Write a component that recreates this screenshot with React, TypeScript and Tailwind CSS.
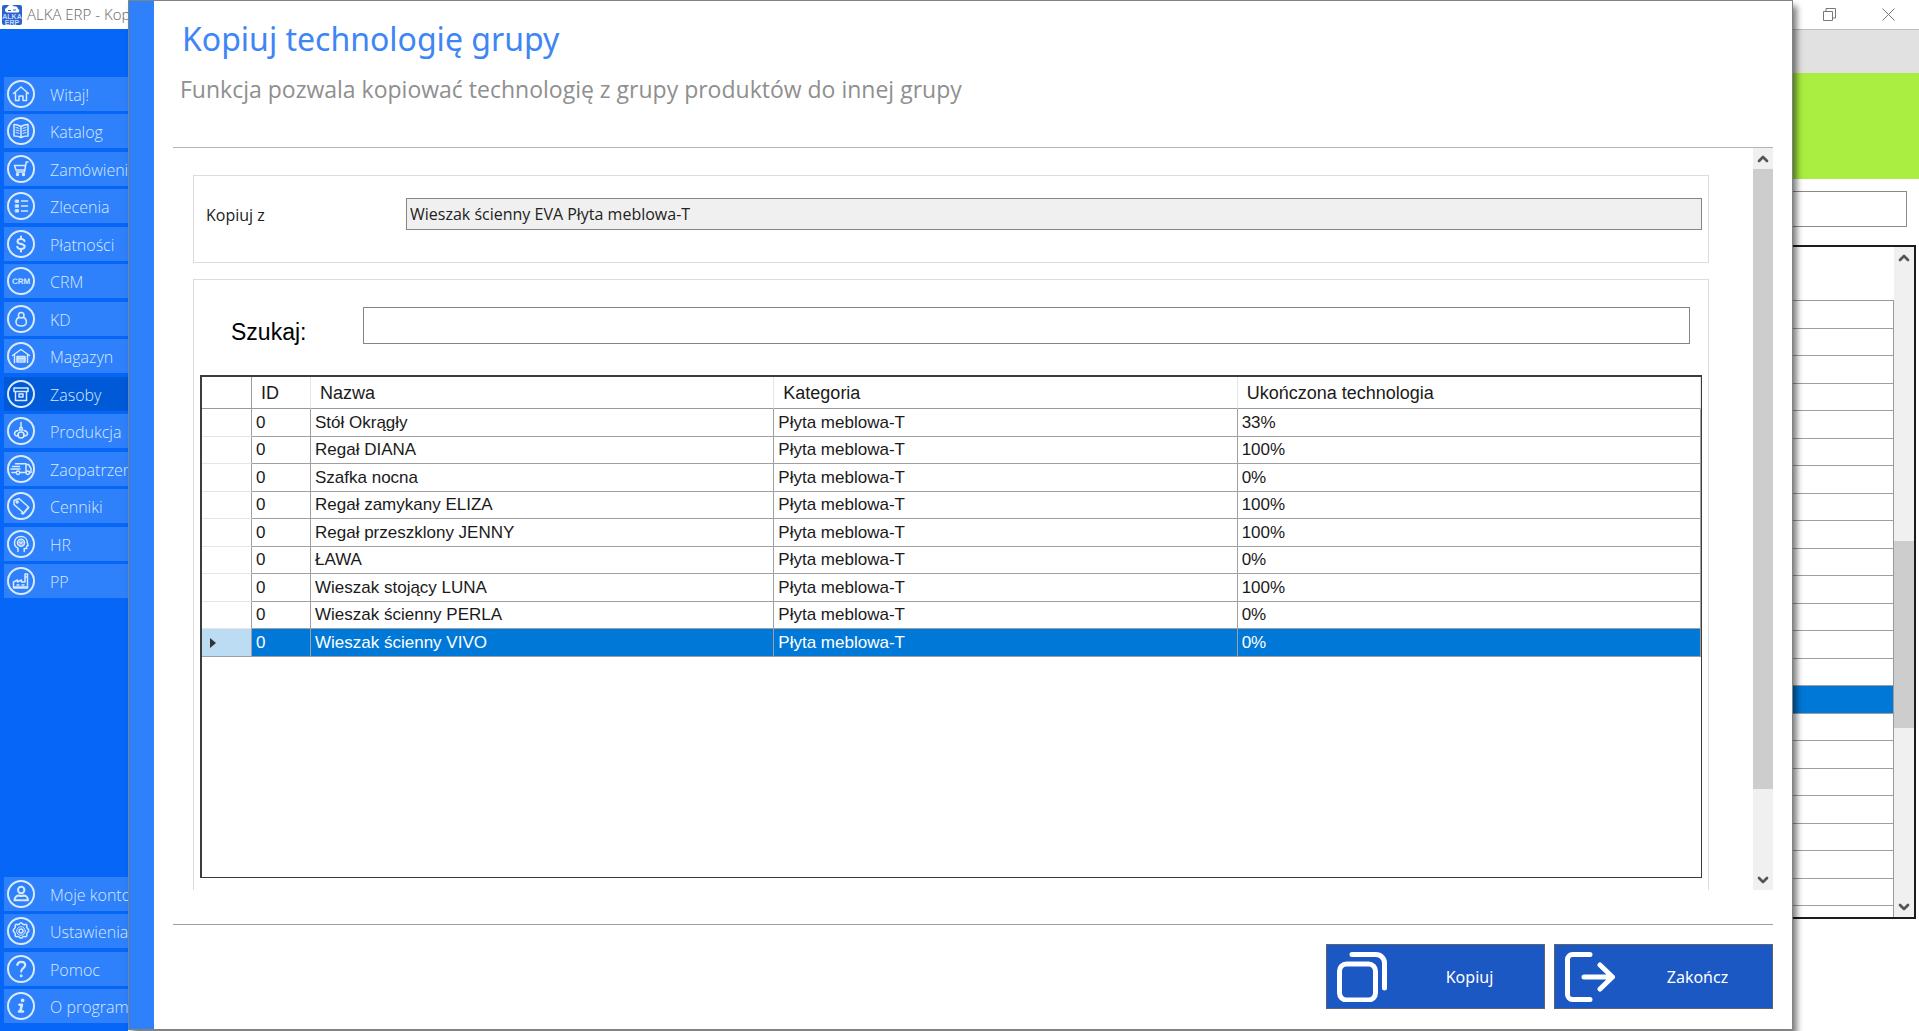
import type { ReactNode } from "react";
import { ChevronDown, ChevronUp } from "lucide-react";

type MenuItem = { label: string; icon: ReactNode; active?: boolean };

const mainMenu: MenuItem[] = [
  { label: "Witaj!", icon: <path d="M6.5 13.5 14 7l7.5 6.5M8.5 12.5v8h3.5v-4.5h4v4.5h3.5v-8" /> },
  {
    label: "Katalog",
    icon: (
      <>
        <path d="M14 9.500c-2-1.200-4.500-2-7-2V19c2.500 0 5 .300 7 1.500 2-1.200 4.500-1.500 7-1.500V7.500c-2.500 0-5 .800-7 2zM14 9.500v11" />
        <path strokeWidth="1" d="M9 10.500l3 .8M9 13l3 .8M9 15.500l3 .8M19 10.500l-3 .8M19 13l-3 .8M19 15.500l-3 .8" />
      </>
    ),
  },
  {
    label: "Zamówienia",
    icon: (
      <>
        <path d="M21 7h-1.800l-1.700 10H9.500M7.500 10.500h10.500M7.500 10.500l1.500 4.500h8.500" />
        <circle cx="10.500" cy="19.500" r="1" fill="currentColor" />
        <circle cx="16.500" cy="19.500" r="1" fill="currentColor" />
      </>
    ),
  },
  {
    label: "Zlecenia",
    icon: (
      <>
        <path d="M14.500 9h6M14.500 14h6M14.500 19h6" />
        <path fill="currentColor" d="M8.500 8h3v2.500h-3zM8.500 12.800h3v2.500h-3zM8.500 17.600h3v2.500h-3z" strokeWidth="0.8" />
      </>
    ),
  },
  {
    label: "Płatności",
    icon: <path strokeWidth="2" d="M17.500 11c-.500-1.500-1.800-2-3.500-2-2 0-3.500.800-3.500 2.400 0 3.600 7.200 1.800 7.200 5.200 0 1.600-1.600 2.400-3.700 2.400-2 0-3.300-.700-3.800-2.200M14 6.500V9M14 19v2.500" />,
  },
  {
    label: "CRM",
    icon: (
      <text
        x="14"
        y="16.500"
        textAnchor="middle"
        fontSize="8"
        fontWeight="700"
        fontFamily="Liberation Sans, sans-serif"
        textRendering="geometricPrecision"
        fill="currentColor"
        stroke="none"
      >
        CRM
      </text>
    ),
  },
  {
    label: "KD",
    icon: (
      <>
        <circle cx="14.200" cy="10.200" r="2.800" />
        <path d="M11.800 12.500c-1.800.800-2.800 2.500-2.800 4.500 0 2.800 1.200 4 5.200 4s5.200-1.200 5.200-4c0-2-1-3.700-2.800-4.500" />
      </>
    ),
  },
  {
    label: "Magazyn",
    icon: (
      <>
        <path d="M5.500 13.500 14 7.500l8.500 6M7.500 12.500v8M20.500 12.500v8" />
        <path d="M10 20v-5.500h8V20zM10 16.200h8M10 18h8" />
      </>
    ),
  },
  {
    label: "Zasoby",
    active: true,
    icon: <path d="M7 8h14v3.500H7zM8.500 11.500v9h11v-9M12 14h4v3h-4z" />,
  },
  {
    label: "Produkcja",
    icon: (
      <>
        <path d="M14 5.500v5M13 10.500h2l.500 2.500h-3z" />
        <path d="M11 13.500c-2.200.500-3.500 1.600-3.500 3 0 1.200 1 2.200 2.500 2.600l1.500-1.600M17 13.500c2.200.500 3.500 1.600 3.500 3 0 1.200-1 2.200-2.500 2.600l-1.500-1.600" />
        <circle cx="14" cy="18" r="3" />
      </>
    ),
  },
  {
    label: "Zaopatrzenie",
    icon: (
      <>
        <path d="M8.500 8.800h10.500v8.700M19 9.500h2.500l2.500 4v4h-1.500M5.500 11.500h7M4 14h9M5 17.500h4M13 17.500h6" />
        <circle cx="11" cy="17.700" r="1.700" />
        <circle cx="20.800" cy="17.700" r="1.700" />
      </>
    ),
  },
  {
    label: "Cenniki",
    icon: (
      <>
        <path d="M7 8.500 12 6.500l9.500 8.500-5 6-9.500-8.500z" />
        <path d="m14.500 21.300 1.700.7 5.500-6.500" />
        <circle cx="10.200" cy="10" r="1" />
      </>
    ),
  },
  {
    label: "HR",
    icon: (
      <>
        <path d="M11 21.500v-3.200c-2.400-1.200-3.500-3.200-3.500-5.300C7.500 9 10.300 6.500 14 6.500s6.300 2.500 6.300 6l.9 3-1.500.5v2.500h-2.500v3" />
        <circle cx="14" cy="12.800" r="3.500" />
        <path d="M14 9.500v6.500M11 12.800h6M11.800 10.800l4.400 4M16.200 10.800l-4.400 4" strokeWidth="0.9" />
      </>
    ),
  },
  {
    label: "PP",
    icon: <path d="M6.500 21v-6l4-2v2l4-2v2h3.500V7h2.500v14zM10 18h2M15 18h2M18 10h2.500M6.500 20h14" />,
  },
];

const footerMenu: MenuItem[] = [
  {
    label: "Moje konto",
    icon: (
      <>
        <circle cx="14.200" cy="10" r="3.200" strokeWidth="2" />
        <path strokeWidth="2" d="M7.500 20.300c0-3.300 2.300-4.800 4.500-4.800 1.500.800 3 .800 4.500 0 2.200 0 4.500 1.500 4.500 4.800z" />
      </>
    ),
  },
  {
    label: "Ustawienia",
    icon: (
      <>
        <path d="m12.600 7 .5-1h1.800l.5 1 1.700.7 1.800-.4 1 1-.3 1.800 1 1.500 1 .9v2l-1 .9-1 1.500.3 1.800-1 1-1.800-.3-1.700.7-.5 1h-1.800l-.5-1-1.700-.7-1.800.3-1-1 .3-1.800-1-1.500-1-.9v-2l1-.9 1-1.500-.3-1.800 1-1 1.800.4z" />
        <circle cx="14" cy="14" r="4.300" strokeWidth="1" />
        <circle cx="14" cy="14" r="2" />
      </>
    ),
  },
  {
    label: "Pomoc",
    icon: (
      <>
        <path strokeWidth="2.200" d="M10.300 9.800c.4-1.900 1.800-3 3.900-3 2.300 0 4 1.300 4 3.300 0 3.100-4 3-4 6.400" />
        <circle cx="14.200" cy="20.800" r="0.600" strokeWidth="1.800" />
      </>
    ),
  },
  {
    label: "O programie",
    icon: (
      <>
        <path strokeWidth="2.600" d="M12.500 12.800h2.400l-1.600 6.700h2.700M12 19.500h1.500" />
        <circle cx="15.600" cy="8.300" r="1" strokeWidth="1.800" />
      </>
    ),
  },
];

const products = [
  ["Stół Okrągły", "33%"],
  ["Regał DIANA", "100%"],
  ["Szafka nocna", "0%"],
  ["Regał zamykany ELIZA", "100%"],
  ["Regał przeszklony JENNY", "100%"],
  ["ŁAWA", "0%"],
  ["Wieszak stojący LUNA", "100%"],
  ["Wieszak ścienny PERLA", "0%"],
  ["Wieszak ścienny VIVO", "0%"],
];

const SELECTED = 8;
const BACK_ROWS = 23;
const BACK_SELECTED = 14;

function Menu({ items }: { items: MenuItem[] }) {
  return (
    <ul>
      {items.map((item) => (
        <li key={item.label} className="odd:mb-[3px] even:mb-1">
          <a
            href="#"
            className={`flex h-[34px] items-center gap-[15px] pl-[3px] whitespace-nowrap text-[#d9eaff] ${
              item.active ? "bg-[#0059d6]" : "bg-[#2e80fb]"
            }`}
          >
            <svg
              viewBox="0 0 28 28"
              className="size-7 shrink-0"
              fill="none"
              stroke="currentColor"
              strokeWidth="1.5"
              strokeLinecap="round"
              strokeLinejoin="round"
              aria-hidden="true"
            >
              <circle cx="14" cy="14" r="13" strokeWidth="2" />
              {item.icon}
            </svg>
            <span className="pt-0.5 font-['Open_Sans','Noto_Sans',sans-serif] text-base font-light">{item.label}</span>
          </a>
        </li>
      ))}
    </ul>
  );
}

function ScrollBar({ before, thumb }: { before: string; thumb: string }) {
  return (
    <div className="flex w-5 shrink-0 flex-col items-center bg-[#f0f0f0] text-[#555]">
      <div className="flex h-[21px] items-center">
        <ChevronUp size={16} strokeWidth={4} />
      </div>
      <div className={`w-full ${before}`} />
      <div className={`w-full bg-[#cdcdcd] ${thumb}`} />
      <div className="flex-1" />
      <div className="flex h-[21px] items-center">
        <ChevronDown size={16} strokeWidth={4} />
      </div>
    </div>
  );
}

function BackgroundWindow() {
  return (
    <div className="flex h-full flex-col bg-white">
      <div className="flex h-[29px] shrink-0 items-center justify-between">
        <div className="flex w-32 items-center gap-[5px] overflow-hidden pl-0.5 whitespace-nowrap">
          <svg viewBox="0 0 20 20" className="size-5 shrink-0" aria-hidden="true">
            <rect width="20" height="20" rx="2" fill="#2b62d0" />
            <path d="M4 7a2.500 2.500 0 0 1 1-4.500A4 4 0 0 1 12 1.500a3 3 0 0 1 4 2.500 1.800 1.800 0 0 1 0 3.500H5z" fill="#fff" />
            <path d="M6 5.500h3M11 5h3" stroke="#2b62d0" strokeWidth="1" />
            <g fill="#c5dcff" fontSize="7" fontWeight="700" textAnchor="middle" fontFamily="Liberation Sans, sans-serif">
              <text x="10" y="13.500">ALKA</text>
              <text x="10" y="19.500">ERP</text>
            </g>
          </svg>
          <span className="font-['Open_Sans','Noto_Sans',sans-serif] text-[15px] font-light text-[#666]">
            ALKA ERP - Kopiuj
          </span>
        </div>
        <div className="flex gap-[46px] pr-6 text-[#777]">
          <button type="button" aria-label="Przywróć">
            <svg viewBox="0 0 13 13" className="size-[13px]" fill="none" stroke="currentColor">
              <path d="M.5 3.500h9v9h-9zM3 3.500v-3h9.500v9.500h-3" />
            </svg>
          </button>
          <button type="button" aria-label="Zamknij">
            <svg viewBox="0 0 13 13" className="size-[13px]" stroke="currentColor">
              <path d="m.5.5 12 12m0-12-12 12" />
            </svg>
          </button>
        </div>
      </div>

      <div className="flex min-h-0 flex-1">
        <nav className="flex w-32 shrink-0 flex-col justify-between overflow-hidden bg-[#0566f7] pt-12 pb-1 pl-1">
          <Menu items={mainMenu} />
          <Menu items={footerMenu} />
        </nav>

        <div className="flex min-w-0 flex-1 flex-col">
          <div className="h-11 shrink-0 border-t border-[#bdbdbd] bg-[#e1e1e1]" />
          <div className="h-[106px] shrink-0 bg-[#a9ee41]" />
          <div className="mt-3 mr-3 h-9 shrink-0 border border-[#8a8a8a]" />
          <div className="mt-[18px] mr-[3px] mb-28 flex min-h-0 flex-1 overflow-hidden border-2 border-[#1c1c1c]">
            <div className="min-h-0 flex-1 pt-[53px]">
              <div className="h-full overflow-hidden border-t border-r border-[#9a9a9a]">
                {Array.from({ length: BACK_ROWS }, (_, i) => (
                  <div
                    key={i}
                    className={`border-b border-[#a0a0a0] odd:h-7 even:h-[27px] ${i === BACK_SELECTED ? "bg-[#0078d7]" : ""}`}
                  />
                ))}
              </div>
            </div>
            <ScrollBar before="h-[273px]" thumb="h-[187px]" />
          </div>
        </div>
      </div>
    </div>
  );
}

function ProductTable() {
  return (
    <div className="min-h-0 flex-1 border-2 border-r border-b border-[#3c3c3c] font-['Liberation_Sans',Arial,sans-serif] text-[17px] leading-5 text-[#1a1a1a]">
      <table className="w-full table-fixed border-separate border-spacing-0 text-left">
        <colgroup>
          <col className="w-[50px]" />
          <col className="w-[59px]" />
          <col />
          <col />
          <col />
        </colgroup>
        <thead>
          <tr className="h-8 text-lg leading-5 *:border-r *:border-b *:border-[#9a9a9a] *:p-0 *:pl-[9px] *:font-normal">
            <th aria-label="Wybór" />
            <th className="border-r-[#e5e5e5]!">ID</th>
            <th className="border-r-[#e5e5e5]!">Nazwa</th>
            <th className="border-r-[#e5e5e5]!">Kategoria</th>
            <th className="border-r-[#e5e5e5]!">Ukończona technologia</th>
          </tr>
        </thead>
        <tbody>
          {products.map(([name, done], i) => {
            const selected = i === SELECTED;
            return (
              <tr
                key={name}
                className={`odd:h-7 even:h-[27px] *:border-r *:border-b *:border-[#a0a0a0] *:p-0 *:pl-1 ${
                  selected ? "bg-[#0078d7] text-white" : ""
                }`}
              >
                <td className={selected ? "bg-[#bcdcf4]" : "border-b-[#e5e5e5]!"}>
                  {selected && (
                    <svg viewBox="0 0 6 10" className="ml-1 h-2.5 w-1.5" aria-hidden="true">
                      <path d="M0 0l6 5-6 5z" fill="#333" />
                    </svg>
                  )}
                </td>
                <td>0</td>
                <td>{name}</td>
                <td>Płyta meblowa-T</td>
                <td>{done}</td>
              </tr>
            );
          })}
        </tbody>
      </table>
    </div>
  );
}

function ActionButton({ label, children }: { label: string; children: ReactNode }) {
  return (
    <button
      type="button"
      className="flex h-[65px] w-[219px] items-center border border-[#5d6470] bg-[#1b58c4] pl-2.5 text-white"
    >
      <svg
        viewBox="0 0 50 50"
        className="size-[50px] shrink-0"
        fill="none"
        stroke="currentColor"
        strokeWidth="5"
        strokeLinecap="round"
        strokeLinejoin="round"
        aria-hidden="true"
      >
        {children}
      </svg>
      <span className="flex-1 pl-2 text-base">{label}</span>
    </button>
  );
}

function CopyDialog() {
  return (
    <section
      role="dialog"
      aria-labelledby="dialog-title"
      className="absolute top-0 right-[126px] bottom-px left-32 flex border border-[#7d8584] bg-white shadow-[4px_6px_6px_rgba(0,0,0,0.5)]"
    >
      <div className="w-[25px] shrink-0 bg-[#2e80fb]" />
      <div className="flex min-w-0 flex-1 flex-col px-[19px]">
        <header className="h-[147px] shrink-0 border-b border-[#b4b4b4] pt-[18px] pl-[9px]">
          <h1 id="dialog-title" className="text-[32px] leading-10 text-[#3e85f5]">
            Kopiuj technologię grupy
          </h1>
          <p className="-ml-0.5 pt-3.5 font-['Open_Sans','Noto_Sans',sans-serif] text-[23px] leading-8 text-[#8f8f8f]">
            Funkcja pozwala kopiować technologię z grupy produktów do innej grupy
          </p>
        </header>

        <div className="flex min-h-0 flex-1">
          <div className="flex min-w-0 flex-1 flex-col gap-4 pt-[27px] pr-11 pl-5">
            <div className="flex h-[88px] shrink-0 items-center border border-[#dcdcdc] pr-1.5 pb-3 pl-3 font-['Open_Sans','Noto_Sans',sans-serif] text-base text-[#222]">
              <label htmlFor="source" className="w-[200px] pt-1">
                Kopiuj z
              </label>
              <input
                id="source"
                readOnly
                value="Wieszak ścienny EVA Płyta meblowa-T"
                className="mt-0.5 h-8 min-w-0 flex-1 border border-[#858585] bg-[#f0f0f0] px-[3px] pb-px"
              />
            </div>

            <div className="flex min-h-0 flex-1 flex-col border border-b-0 border-[#dcdcdc] pt-[27px] pr-1.5 pb-3 pl-1.5">
              <div className="mb-[29px] flex items-start pr-3 pl-[31px]">
                <label
                  htmlFor="search"
                  className="w-[132px] pt-[11px] font-['Liberation_Sans',Arial,sans-serif] text-[23px] leading-7 text-black"
                >
                  Szukaj:
                </label>
                <input id="search" type="text" className="h-[37px] min-w-0 flex-1 border border-[#858585] px-2" />
              </div>
              <ProductTable />
            </div>
          </div>
          <ScrollBar before="h-0" thumb="h-[620px]" />
        </div>

        <footer className="mt-[34px] flex shrink-0 justify-end gap-[9px] border-t border-[#a0a0a0] pt-[19px] pb-5">
          <ActionButton label="Kopiuj">
            <rect x="2.500" y="12" width="36" height="36" rx="7" />
            <path d="M15 2.500h24a8.500 8.500 0 0 1 8.500 8.500v25" />
          </ActionButton>
          <ActionButton label="Zakończ">
            <path d="M25 2.500H7.500a5 5 0 0 0-5 5v35a5 5 0 0 0 5 5H25M19 25h28M35 13l12.500 12L35 37" />
          </ActionButton>
        </footer>
      </div>
    </section>
  );
}

export default function App() {
  return (
    <main className="relative h-screen overflow-hidden font-['Noto_Sans','Open_Sans',sans-serif]">
      <BackgroundWindow />
      <CopyDialog />
    </main>
  );
}
